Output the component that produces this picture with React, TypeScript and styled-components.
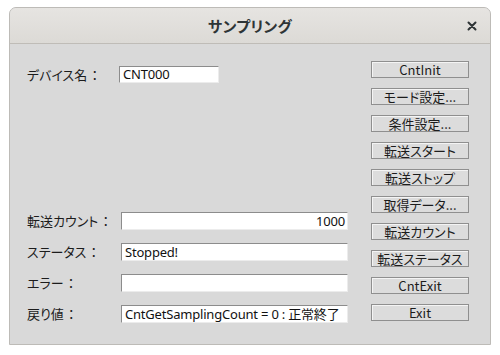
import React from "react";
import styled, { createGlobalStyle } from "styled-components";

const GlobalStyle = createGlobalStyle`
  html, body {
    margin: 0;
    background: #ffffff;
  }
  body {
    font-family: "Noto Sans CJK JP", "Noto Sans", sans-serif;
    font-feature-settings: "palt";
  }
`;

const Window = styled.div`
  margin: 7px 0 0 9px;
  width: 482px;
  height: 338px;
  box-sizing: border-box;
  border: 1px solid #bdbbb7;
  border-radius: 7px 7px 0 0;
  background: #d9d9d9;
  display: flex;
  flex-direction: column;
  overflow: hidden;
`;

const TitleBar = styled.div`
  height: 35px;
  flex: none;
  position: relative;
  display: flex;
  align-items: center;
  justify-content: center;
  background: linear-gradient(#e6e4e1, #dcdad6);
  border-bottom: 1px solid #bfbcb7;
`;

const Title = styled.div`
  font-size: 15px;
  font-weight: bold;
  color: #2e3436;
  letter-spacing: 0.3px;
`;

const CloseButton = styled.div`
  position: absolute;
  right: 11px;
  top: 11px;
  width: 14px;
  height: 14px;
  display: flex;
  align-items: center;
  justify-content: center;
`;

const Body = styled.div`
  flex: 1;
  display: flex;
  padding: 17px 21px 21px 17px;
  gap: 23px;
`;

const LeftColumn = styled.div`
  flex: 1;
  display: flex;
  flex-direction: column;
  justify-content: space-between;
`;

const FieldGroup = styled.div`
  display: flex;
  flex-direction: column;
  gap: 12px;
`;

const Row = styled.div<{ $top?: number }>`
  display: flex;
  align-items: center;
  margin-top: ${(p) => p.$top ?? 0}px;
`;

const Label = styled.div<{ $width: number }>`
  width: ${(p) => p.$width}px;
  flex: none;
  font-size: 13px;
  color: #1c1c1c;
`;

const Colon = styled.span`
  font-feature-settings: normal;
  margin-left: 1px;
`;

const Field = styled.div<{ $width?: number; $right?: boolean; $height: number }>`
  box-sizing: border-box;
  width: ${(p) => (p.$width ? `${p.$width}px` : "auto")};
  flex: ${(p) => (p.$width ? "none" : 1)};
  height: ${(p) => p.$height}px;
  background: #ffffff;
  border-top: 1px solid #8c8c8c;
  border-left: 1px solid #8c8c8c;
  border-right: 1px solid #ececec;
  border-bottom: 1px solid #ececec;
  padding: 0 2px 0 3px;
  font-family: "Noto Sans", "Noto Sans CJK JP", sans-serif;
  font-size: 13px;
  letter-spacing: -0.2px;
  color: #111111;
  line-height: ${(p) => p.$height - 2}px;
  text-align: ${(p) => (p.$right ? "right" : "left")};
  white-space: nowrap;
  overflow: hidden;
`;

const ButtonColumn = styled.div`
  width: 98px;
  flex: none;
  display: flex;
  flex-direction: column;
  gap: 10px;
`;

const Button = styled.div`
  box-sizing: border-box;
  height: 17px;
  border: 1px solid #8f8f8f;
  box-shadow: inset 1px 1px 0 #f4f4f4;
  background: #dcdcdc;
  font-size: 13px;
  color: #1c1c1c;
  line-height: 15px;
  text-align: center;
  white-space: nowrap;
`;

const buttons = [
  "CntInit",
  "モード設定...",
  "条件設定...",
  "転送スタート",
  "転送ストップ",
  "取得データ...",
  "転送カウント",
  "転送ステータス",
  "CntExit",
  "Exit",
];

const fields = [
  { label: "転送カウント", value: "1000", right: true },
  { label: "ステータス", value: "Stopped!" },
  { label: "エラー", value: "" },
  { label: "戻り値", value: "CntGetSamplingCount = 0 : 正常終了" },
];

export default function App() {
  return (
    <>
      <GlobalStyle />
      <Window>
        <TitleBar>
          <Title>サンプリング</Title>
          <CloseButton>
            <svg width="10" height="10" viewBox="0 0 10 10">
              <path d="M1.5 1.5 L8.5 8.5 M8.5 1.5 L1.5 8.5" stroke="#2e3436" strokeWidth="2" strokeLinecap="round" />
            </svg>
          </CloseButton>
        </TitleBar>
        <Body>
          <LeftColumn>
            <Row $top={4}>
              <Label $width={92}>
                デバイス名<Colon>：</Colon>
              </Label>
              <Field $width={100} $height={17}>CNT000</Field>
            </Row>
            <FieldGroup>
              {fields.map((f) => (
                <Row key={f.label}>
                  <Label $width={94}>
                    {f.label}
                    <Colon>：</Colon>
                  </Label>
                  <Field $height={18} $right={f.right}>
                    {f.value}
                  </Field>
                </Row>
              ))}
            </FieldGroup>
          </LeftColumn>
          <ButtonColumn>
            {buttons.map((b) => (
              <Button key={b}>{b}</Button>
            ))}
          </ButtonColumn>
        </Body>
      </Window>
    </>
  );
}
